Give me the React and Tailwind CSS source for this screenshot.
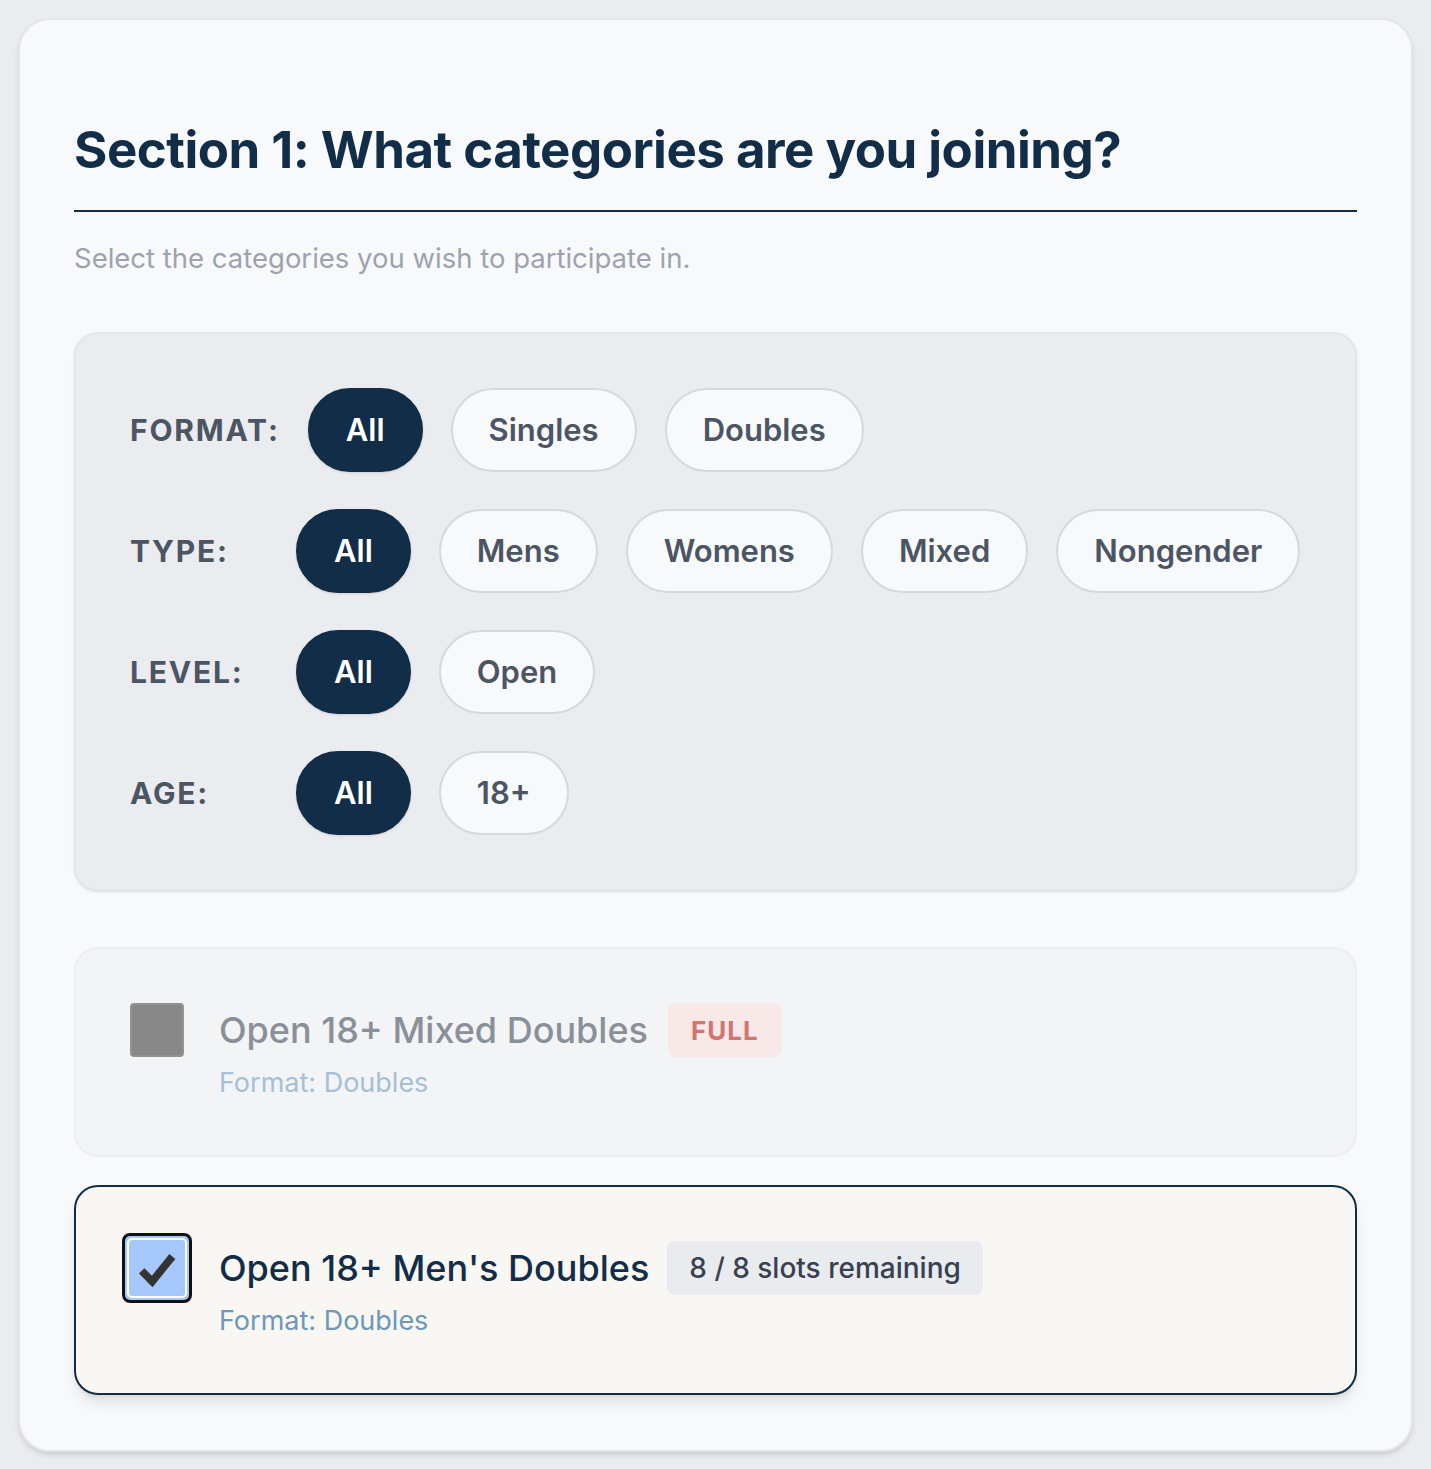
import { useState } from "react";

const filters = [
  { label: "FORMAT:", options: ["All", "Singles", "Doubles"] },
  { label: "TYPE:", options: ["All", "Mens", "Womens", "Mixed", "Nongender"] },
  { label: "LEVEL:", options: ["All", "Open"] },
  { label: "AGE:", options: ["All", "18+"] },
];

const FilterRow = ({ label, options, value, onPick }) => (
  <div className="flex items-center gap-7">
    <span className="min-w-[138px] text-[30px] font-bold tracking-[0.06em] text-[#4b5563]">
      {label}
    </span>
    <div className="flex items-center gap-7">
      {options.map((opt) => (
        <button
          key={opt}
          type="button"
          onClick={() => onPick(opt)}
          className={
            value === opt
              ? "h-[84px] rounded-full border-2 border-[#112d47] bg-[#112d47] px-9 text-[31px] font-semibold text-white shadow-sm"
              : "h-[84px] rounded-full border-2 border-[#d5d8dd] bg-[#f8f9fb] px-9 text-[31px] font-semibold text-[#4b5563]"
          }
        >
          {opt}
        </button>
      ))}
    </div>
  </div>
);

const App = () => {
  const [picked, setPicked] = useState({
    "FORMAT:": "All",
    "TYPE:": "All",
    "LEVEL:": "All",
    "AGE:": "All",
  });
  const [mens, setMens] = useState(true);

  return (
    <div
      className="min-h-screen bg-[#ebecef] p-[18px]"
      style={{ fontFamily: "Inter, 'Noto Sans', sans-serif" }}
    >
      <div className="rounded-[32px] border-2 border-[#e4e6ea] bg-[#f8f9fb] px-[54px] pb-[55px] pt-[100px] shadow-md">
        <h1 className="border-b-2 border-[#112d47] pb-[30px] text-[51px] font-bold leading-[60px] tracking-[-0.01em] text-[#112d47]">
          Section 1: What categories are you joining?
        </h1>
        <p className="mt-7 text-[27.5px] leading-9 text-[#9ca3af]">
          Select the categories you wish to participate in.
        </p>

        {/* filters */}
        <div className="mt-14 flex flex-col gap-[37px] rounded-3xl border-2 border-[#e4e6ea] bg-[#ebecf0] p-[54px] shadow-sm">
          {filters.map((f) => (
            <FilterRow
              key={f.label}
              label={f.label}
              options={f.options}
              value={picked[f.label]}
              onPick={(v) => setPicked({ ...picked, [f.label]: v })}
            />
          ))}
        </div>

        {/* categories */}
        <div className="mt-14 flex flex-col gap-7">
          <div className="flex gap-[35px] rounded-3xl border-2 border-[#eceef1] bg-[#f3f4f6] p-[54px]">
            <div className="flex h-[54px] w-[54px] items-center justify-center">
              <div className="h-[54px] w-[54px] rounded-[4px] border-2 border-[#929292] bg-[#888888]" />
            </div>
            <div className="flex flex-col">
              <div className="flex items-center gap-5">
                <span className="text-[36px] font-medium leading-[54px] text-[#8a9099]">
                  Open 18+ Mixed Doubles
                </span>
                <span className="flex h-[54px] items-center rounded-lg bg-[#f9e8e8] px-[23px] text-[26px] font-bold tracking-[0.04em] text-[#d47370]">
                  FULL
                </span>
              </div>
              <span className="mt-2 text-[27px] leading-9 text-[#a5c0d6]">
                Format: Doubles
              </span>
            </div>
          </div>

          <div
            onClick={() => setMens(!mens)}
            className="flex cursor-pointer gap-[35px] rounded-3xl border-2 border-[#112d47] bg-[#f8f7f4] p-[54px] shadow-lg"
          >
            <div className="flex h-[54px] w-[54px] items-center justify-center">
              <div className="flex h-[70px] w-[70px] shrink-0 items-center justify-center rounded-[8px] border-[3px] border-[#111111] bg-[#a6c8fb] p-[2px]">
                <div className="flex h-full w-full items-center justify-center rounded-[5px] border-2 border-white">
                  {mens && (
                    <svg viewBox="0 0 24 24" className="h-[46px] w-[46px]">
                      <path
                        d="M4 13.5 L9.5 19 L20 6"
                        fill="none"
                        stroke="#333333"
                        strokeWidth="4"
                      />
                    </svg>
                  )}
                </div>
              </div>
            </div>
            <div className="flex flex-col">
              <div className="flex items-center gap-[18px]">
                <span className="text-[36px] font-medium leading-[54px] text-[#112d47]">
                  Open 18+ Men's Doubles
                </span>
                <span className="flex h-[54px] items-center rounded-lg bg-[#e9ebef] px-[22px] text-[28px] font-medium text-[#374151]">
                  8 / 8 slots remaining
                </span>
              </div>
              <span className="mt-2 text-[27px] leading-9 text-[#6e97b8]">
                Format: Doubles
              </span>
            </div>
          </div>
        </div>
      </div>
    </div>
  );
};

export default App;
